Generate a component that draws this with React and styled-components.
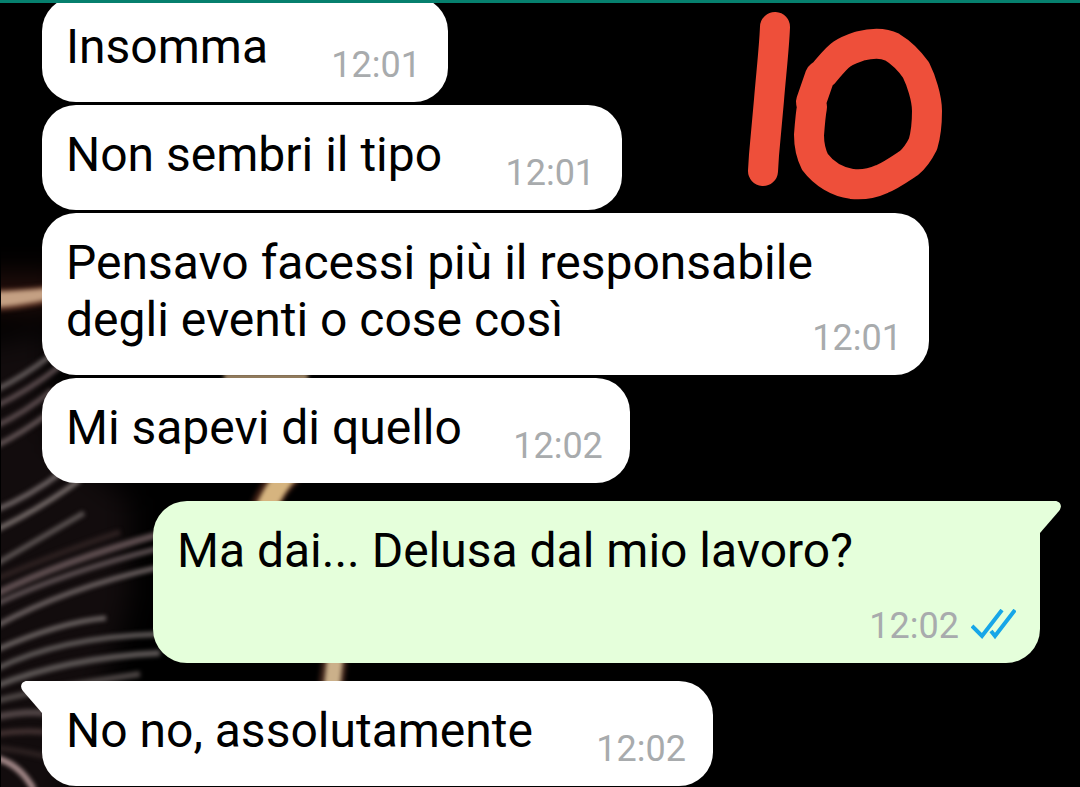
import React from "react";
import styled, { createGlobalStyle, css } from "styled-components";

const GlobalStyle = createGlobalStyle`
  * { box-sizing: border-box; }
  body {
    margin: 0;
    background: #000;
    font-family: Roboto, "Liberation Sans", sans-serif;
  }
`;

const Screen = styled.div`
  position: relative;
  min-height: 100vh;
  overflow: hidden;
  background: #000;
`;

const Wallpaper = styled.svg`
  position: absolute;
  top: 0;
  left: 0;
`;

const AppBar = styled.header`
  position: relative;
  z-index: 1;
  height: 3px;
  background: #06806e;
`;

const Messages = styled.main`
  position: relative;
  display: flex;
  flex-direction: column;
  gap: 3px;
  margin-top: -6px;
  padding: 0 40px 0 42px;
`;

const Bubble = styled.article`
  position: relative;
  display: grid;
  align-self: ${(p) => (p.$out ? "flex-end" : "flex-start")};
  max-width: calc(100% - 111px);
  margin-top: ${(p) => (p.$tail ? "15px" : "0")};
  padding: 21px ${(p) => (p.$out ? "24px" : "27px")} 16px 24px;
  border-radius: 34px;
  background: ${(p) => (p.$out ? "#e5ffdb" : "#fff")};
  ${(p) =>
    p.$tail &&
    (p.$out
      ? css`border-top-right-radius: 0;`
      : css`border-top-left-radius: 0;`)}
`;

const Text = styled.p`
  grid-area: 1 / 1;
  margin: 0 0 11px;
  font-size: 48px;
  line-height: 57px;
  color: #000;
`;

const metaWidths = { normal: "153px", tight: "141px", ticks: "212px" };

const MetaSpace = styled.span`
  display: inline-block;
  width: ${(p) => metaWidths[p.$size]};
`;

const Meta = styled.div`
  grid-area: 1 / 1;
  place-self: end;
  display: flex;
  align-items: center;
  gap: 12px;
  font-size: 36px;
  line-height: 42px;
  color: #a8abad;
`;

const TailShape = styled.svg`
  position: absolute;
  top: 0;
  ${(p) => (p.$out ? "right: -21px; transform: scaleX(-1);" : "left: -21px;")}
`;

const Drawing = styled.svg`
  position: absolute;
  z-index: 2;
  top: 0;
  left: 740px;
`;

function Tail({ out }) {
  return (
    <TailShape $out={out} width="22" height="33" aria-hidden="true">
      <path
        d="M22 0H6C1 0-2 5 2 10L21 32H22Z"
        fill={out ? "#e5ffdb" : "#fff"}
      />
    </TailShape>
  );
}

function ReadTicks() {
  return (
    <svg width="45" height="34" viewBox="0 0 45 34" role="img" aria-label="Letto">
      <g fill="none" stroke="#17a6e8" strokeWidth="4">
        <path d="M1 17L11 27L31 1" />
        <path d="M20 22L24 27L44 1" />
      </g>
    </svg>
  );
}

function Message({ text, time, out, tail, size = "normal" }) {
  return (
    <Bubble $out={out} $tail={tail}>
      {tail && <Tail out={out} />}
      <Text>
        {text}
        <MetaSpace $size={size} />
      </Text>
      <Meta>
        <time>{time}</time>
        {out && <ReadTicks />}
      </Meta>
    </Bubble>
  );
}

const strands = [
  ["M-4 390Q24 376 50 356", "#625a5a", 5],
  ["M-4 406Q28 391 60 366", "#5b4c4e", 5],
  ["M-4 426Q26 412 52 390", "#5a4b4d", 5],
  ["M-4 446Q24 432 50 412", "#625455", 5],
  ["M-4 510Q30 496 62 472", "#6e6464", 5],
  ["M-4 530Q38 510 80 480", "#766c6a", 5],
  ["M-4 564Q36 541 84 513", "#5c5453", 5],
  ["M-4 579Q60 552 120 532", "#2c2020", 6],
  ["M-4 594Q60 562 160 534", "#5e4e50", 7],
  ["M-4 604Q66 572 160 548", "#5c5052", 5],
  ["M-4 626Q66 588 160 567", "#6a6060", 5],
  ["M-4 650Q60 622 106 618", "#6c6463", 5],
  ["M-4 669Q60 637 160 634", "#625c5b", 5],
  ["M-4 686Q66 658 160 653", "#5e5857", 6],
  ["M-4 701Q46 688 140 674", "#4d4645", 6],
  ["M-4 717Q24 711 44 713", "#504445", 7],
  ["M-4 734Q20 730 44 732", "#3f2f2f", 6],
  ["M-4 748Q20 750 44 756", "#2b2020", 6],
  ["M-4 758Q20 764 34 790", "#a78c8c", 6],
];

const messages = [
  { text: "Insomma", time: "12:01" },
  { text: "Non sembri il tipo", time: "12:01" },
  {
    text: "Pensavo facessi più il responsabile degli eventi o cose così",
    time: "12:01",
  },
  { text: "Mi sapevi di quello", time: "12:02", size: "tight" },
  {
    text: "Ma dai... Delusa dal mio lavoro?",
    time: "12:02",
    out: true,
    tail: true,
    size: "ticks",
  },
  { text: "No no, assolutamente", time: "12:02", tail: true },
];

export default function App() {
  return (
    <>
      <GlobalStyle />
      <Screen>
        <Wallpaper width="400" height="787" aria-hidden="true">
          <defs>
            <filter
              id="soft"
              filterUnits="userSpaceOnUse"
              x="-40"
              y="200"
              width="440"
              height="640"
              colorInterpolationFilters="sRGB"
            >
              <feGaussianBlur stdDeviation="2" />
            </filter>
            <filter
              id="haze"
              filterUnits="userSpaceOnUse"
              x="-100"
              y="100"
              width="500"
              height="800"
              colorInterpolationFilters="sRGB"
            >
              <feGaussianBlur stdDeviation="14" />
            </filter>
          </defs>
          <g filter="url(#haze)">
            <path d="M-40 350L50 330V440L130 500V600L100 700L50 830H-40Z" fill="#120c0d" />
            <path d="M-40 275H60V310H-40Z" fill="#240f0c" />
          </g>
          <g filter="url(#soft)" fill="none">
            {strands.map(([d, color, width]) => (
              <path key={d} d={d} stroke={color} strokeWidth={width} />
            ))}
            <path d="M-6 311Q20 310 50 303V285Q20 289-6 289Z" fill="#5c3526" />
            <path d="M-6 307Q16 306 50 299V288Q20 291-6 292Z" fill="#c4a083" />
            <path d="M224 377H308" stroke="#a58b6a" strokeWidth="7" />
            <path d="M292 470Q274 484 262 512" stroke="#3a1c12" strokeWidth="28" />
            <path d="M292 470Q276 484 264 512" stroke="#d6b47f" strokeWidth="20" />
            <path d="M336 650L330 695" stroke="#3a2118" strokeWidth="26" />
            <path d="M336 650L331 695" stroke="#cbb08a" strokeWidth="16" />
          </g>
          <path d="M0 0H1V787H0Z" fill="#000" />
        </Wallpaper>
        <AppBar />
        <Messages>
          {messages.map((m) => (
            <Message key={m.text} {...m} />
          ))}
        </Messages>
        <Drawing width="210" height="205" aria-hidden="true">
          <g
            fill="none"
            stroke="#ee4f3a"
            strokeWidth="30"
            strokeLinecap="round"
            strokeLinejoin="round"
          >
            <path d="M35 27C34 50 31 75 29 100L24 155L23 171" />
            <path d="M120 46C132 43 144 43 152 47C162 53 171 63 176 70C181 80 187 98 187 111C187 124 186 134 183 144C179 152 175 158 169 163C160 169 150 176 142 179C131 184 121 185 112 184C98 182 84 174 75 162C70 152 69 143 69 135C70 122 71 112 72 107L71 102L80 76L84 73C90 66 96 58 102 54C108 50 114 48 120 46Z" />
          </g>
        </Drawing>
      </Screen>
    </>
  );
}
